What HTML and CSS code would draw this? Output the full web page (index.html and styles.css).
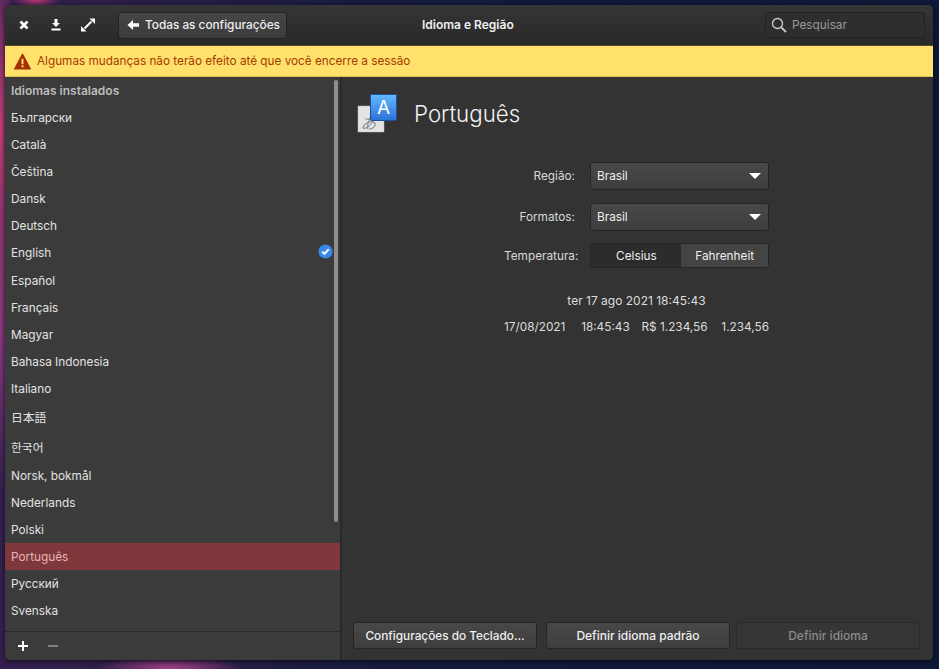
FILE: index.html
```html
<!DOCTYPE html>
<html lang="pt-BR">
<head>
  <meta charset="UTF-8">
  <title>Idioma e Região</title>
  <link rel="stylesheet" href="styles.css">
</head>
<body>
  <div class="window">
    <header class="titlebar">
      <div class="window-controls">
        <svg class="control" viewBox="0 0 16 16"><path d="M4.500 4.500l7 7M11.500 4.500l-7 7" stroke="#fff" stroke-width="2.600"/></svg>
        <svg class="control" viewBox="0 0 16 16"><path d="M6.500 2h3v4H12L8 10 4 6h2.500z" fill="#fff"/><path d="M3.500 12.500h9" stroke="#fff" stroke-width="2"/></svg>
        <svg class="control" viewBox="0 0 16 16"><path d="M9.500 1.500h5.500V7zM6.500 14.500H1V9z" fill="#fff"/><path d="M11.500 4.500l-7 7" stroke="#fff" stroke-width="2"/></svg>
      </div>
      <button class="back-button">
        <svg class="back-arrow" viewBox="0 0 14 12"><path d="M6.500 0.500v3.500H13v4H6.500v3.500L0.500 6z" fill="#fff"/></svg>
        Todas as configurações
      </button>
      <div class="title">Idioma e Região</div>
      <div class="search">
        <svg class="search-icon" viewBox="0 0 16 16"><circle cx="6.500" cy="6.500" r="5" fill="none" stroke="#ccc" stroke-width="1.300"/><path d="M10.300 10.300L15 15" stroke="#ccc" stroke-width="1.800"/></svg>
        Pesquisar
      </div>
    </header>

    <div class="infobar">
      <svg class="warn-icon" viewBox="0 0 16 16"><path d="M8 1L15.500 15H.5z" fill="#a33000" stroke="#a33000" stroke-linejoin="round"/><path d="M8 5.500v5M8 11.500v2" stroke="#ffe16b" stroke-width="1.800"/></svg>
      Algumas mudanças não terão efeito até que você encerre a sessão
    </div>

    <div class="content">
      <aside class="sidebar">
        <div class="list">
          <div class="list-header">Idiomas instalados</div>
          <div class="row">Български</div>
          <div class="row">Català</div>
          <div class="row">Čeština</div>
          <div class="row">Dansk</div>
          <div class="row">Deutsch</div>
          <div class="row row-english">English
            <svg class="check" viewBox="0 0 16 16"><circle cx="8" cy="8" r="7.500" fill="#3689e6"/><path d="M4.500 8.300l2.400 2.300 4.500-5" stroke="#fff" stroke-width="2" fill="none"/></svg>
          </div>
          <div class="row">Español</div>
          <div class="row">Français</div>
          <div class="row">Magyar</div>
          <div class="row">Bahasa Indonesia</div>
          <div class="row">Italiano</div>
          <div class="row row-cjk">日本語</div>
          <div class="row row-cjk">한국어</div>
          <div class="row">Norsk, bokmål</div>
          <div class="row">Nederlands</div>
          <div class="row">Polski</div>
          <div class="row selected">Português</div>
          <div class="row">Русский</div>
          <div class="row">Svenska</div>
          <div class="scrollbar"></div>
        </div>
        <div class="actionbar">
          <svg class="action" viewBox="0 0 12 12"><path d="M6 1v10M1 6h10" stroke="#fff" stroke-width="2"/></svg>
          <svg class="action" viewBox="0 0 12 12"><path d="M1 6h10" stroke="#7f7f7f" stroke-width="2"/></svg>
        </div>
      </aside>

      <main class="main">
        <div class="lang-header">
          <svg class="lang-icon" viewBox="0 0 42 42">
            <defs>
              <linearGradient id="blue" x1="0" y1="0" x2="0" y2="1">
                <stop offset="0" stop-color="#64baff"/>
                <stop offset="1" stop-color="#2a72d8"/>
              </linearGradient>
            </defs>
            <rect x="1" y="13" width="26" height="26" fill="#e4e4e4" stroke="#bdbdbd" stroke-width=".5"/>
            <text x="3.500" y="36" class="icon-kana">あ</text>
            <rect x="13.500" y="1.500" width="26" height="26" rx="1" fill="url(#blue)" stroke="#1c4f9c"/>
            <text x="26.500" y="21" class="icon-letter">A</text>
          </svg>
          <h1>Português</h1>
        </div>

        <div class="settings">
          <div class="setting">
            <label>Região:</label>
            <div class="combo">Brasil<span class="caret"></span></div>
          </div>
          <div class="setting">
            <label>Formatos:</label>
            <div class="combo">Brasil<span class="caret"></span></div>
          </div>
          <div class="setting setting-temp">
            <label>Temperatura:</label>
            <div class="segmented">
              <div class="segment active">Celsius</div>
              <div class="segment">Fahrenheit</div>
            </div>
          </div>
          <div class="preview">
            <div class="preview-date">ter 17 ago 2021 18:45:43</div>
            <div class="preview-formats">
              <span>17/08/2021</span>
              <span class="preview-time">18:45:43</span>
              <span>R$ 1.234,56</span>
              <span>1.234,56</span>
            </div>
          </div>
        </div>

        <div class="buttons">
          <button class="button">Configurações do Teclado...</button>
          <button class="button button-default">Definir idioma padrão</button>
          <button class="button disabled">Definir idioma</button>
        </div>
      </main>
    </div>
  </div>
</body>
</html>
```

FILE: styles.css
```css
html, body {
  height: 100%;
}
body {
  margin: 0;
  overflow: hidden;
  font-family: Inter, "Noto Sans CJK JP", "Noto Sans CJK KR", sans-serif;
  font-size: 11.800px;
  color: #e6e6e6;
  background:
    radial-gradient(ellipse 24px 8px at 36px 0, #b5356f, transparent),
    radial-gradient(ellipse 18px 190px at 0 130px, #c43f78, transparent),
    radial-gradient(ellipse 20px 170px at 0 320px, #8f3a80, transparent),
    radial-gradient(ellipse 75px 14px at 170px 669px, #a83f85, transparent),
    linear-gradient(90deg, #34204f, #141a3c 45%, #0c1836);
}
.window {
  box-sizing: border-box;
  width: 928px;
  height: 655px;
  margin: 5px 0 0 5px;
  display: flex;
  flex-direction: column;
  border-radius: 5px;
  overflow: hidden;
  background: #333;
  box-shadow: 0 1px 4px rgba(0, 0, 0, 0.7);
}
.titlebar {
  height: 40px;
  flex: none;
  display: flex;
  align-items: center;
  position: relative;
  background: linear-gradient(#353535, #292929);
  border-bottom: 1px solid #4f4a35;
}
.window-controls {
  display: flex;
  gap: 16px;
  margin-left: 11px;
}
.control {
  width: 16px;
  height: 16px;
}
.back-button {
  display: flex;
  align-items: center;
  gap: 5px;
  height: 27px;
  width: 169px;
  margin-left: 22px;
  padding: 0 0 0 8px;
  white-space: nowrap;
  font: 500 11.800px Inter, sans-serif;
  color: #eee;
  background: linear-gradient(#464646, #3b3b3b);
  border: 1px solid #222;
  border-radius: 3px;
}
.back-arrow {
  width: 13px;
  height: 12px;
}
.title {
  position: absolute;
  left: 417px;
  top: 12px;
  font-weight: 600;
  font-size: 12px;
  color: #f0f0f0;
}
.search {
  display: flex;
  align-items: center;
  gap: 5px;
  box-sizing: border-box;
  width: 160px;
  height: 26px;
  margin-left: auto;
  margin-right: 8px;
  padding-left: 5px;
  color: #999;
  background: #2e2e2e;
  border: 1px solid #222;
  border-radius: 3px;
}
.search-icon {
  width: 16px;
  height: 16px;
}
.infobar {
  height: 31px;
  flex: none;
  display: flex;
  align-items: center;
  gap: 6px;
  padding-left: 9px;
  font-size: 11.750px;
  color: #a63a00;
  background: #ffe16b;
  border-bottom: 1px solid #e0c050;
  box-sizing: border-box;
}
.warn-icon {
  width: 17px;
  height: 17px;
}
.content {
  flex: 1;
  display: flex;
  min-height: 0;
}
.sidebar {
  width: 335px;
  flex: none;
  display: flex;
  flex-direction: column;
  background: #3b3b3b;
  border-right: 2px solid #2a2a2a;
}
.list {
  flex: 1;
  position: relative;
}
.list-header {
  height: 27px;
  line-height: 28px;
  padding-left: 6px;
  font-weight: 600;
  font-size: 12px;
  color: #bdbdbd;
}
.row {
  height: 27px;
  line-height: 29px;
  padding-left: 6px;
  position: relative;
  color: #e2e2e2;
}
.row-english {
  height: 28px;
}
.row-cjk {
  height: 30px;
  line-height: 33px;
}
.selected {
  background: #7e383b;
  color: #e6b5b8;
}
.check {
  position: absolute;
  left: 313px;
  top: 5px;
  width: 15px;
  height: 15px;
}
.scrollbar {
  position: absolute;
  right: 2px;
  top: 3px;
  width: 4px;
  height: 442px;
  border-radius: 2px;
  background: #8f8f8f;
}
.actionbar {
  height: 28px;
  flex: none;
  display: flex;
  align-items: center;
  gap: 18px;
  padding-left: 12px;
  border-top: 1px solid #2a2a2a;
}
.action {
  width: 12px;
  height: 12px;
}
.main {
  flex: 1;
  display: flex;
  flex-direction: column;
  background: #333;
}
.lang-header {
  display: flex;
  align-items: center;
  gap: 15px;
  padding: 16px 0 0 15px;
}
.lang-icon {
  width: 42px;
  height: 42px;
}
.icon-kana {
  font: italic 15.500px "Noto Sans CJK JP", sans-serif;
  fill: #8a8a8a;
}
.icon-letter {
  font: 19px Inter, sans-serif;
  fill: #fff;
  text-anchor: middle;
}
h1 {
  margin: 0 0 2px;
  font-weight: 300;
  font-size: 22.300px;
  color: #f2f2f2;
}
.settings {
  margin-top: 26px;
  margin-left: 162px;
  width: 265px;
  display: flex;
  flex-direction: column;
}
.setting {
  display: flex;
  align-items: center;
  justify-content: flex-end;
  height: 29px;
  margin-bottom: 12px;
}
.setting label {
  margin-right: 15px;
  color: #d8d8d8;
}
.setting-temp {
  height: 25px;
  margin-bottom: 0;
}
.setting-temp label {
  margin-right: 12px;
}
.combo {
  box-sizing: border-box;
  width: 179px;
  height: 28px;
  display: flex;
  align-items: center;
  justify-content: space-between;
  padding: 0 7px 0 6px;
  background: linear-gradient(#484848, #3e3e3e);
  border: 1px solid #252525;
  border-radius: 3px;
  color: #eee;
}
.caret {
  width: 0;
  height: 0;
  border-left: 6px solid transparent;
  border-right: 6px solid transparent;
  border-top: 6px solid #fff;
}
.segmented {
  box-sizing: border-box;
  width: 179px;
  height: 25px;
  display: flex;
  border: 1px solid #252525;
  border-radius: 3px;
  overflow: hidden;
}
.segment {
  flex: 1;
  display: flex;
  align-items: center;
  justify-content: center;
  background: #444;
  color: #eee;
}
.segment.active {
  flex: none;
  width: 90px;
  background: #2c2c2c;
}
.preview {
  margin-top: 19px;
  color: #dcdcdc;
}
.preview-date {
  text-align: center;
  height: 27px;
  line-height: 27px;
  font-size: 12px;
}
.preview-formats {
  display: flex;
  justify-content: space-between;
  height: 27px;
  line-height: 27px;
}
.preview-time {
  margin: 0 -2px 0 2px;
}
.buttons {
  margin-top: auto;
  display: flex;
  padding: 0 13px 11px 11px;
}
.button {
  width: 184px;
  height: 27px;
  margin-right: 9px;
  padding: 0;
  font: 500 11.800px Inter, sans-serif;
  color: #eee;
  background: linear-gradient(#484848, #3e3e3e);
  border: 1px solid #252525;
  border-radius: 3px;
}
.button-default {
  margin-right: 6px;
  font-size: 12px;
}
.button.disabled {
  margin-right: 0;
  font-size: 12px;
  color: #8a8a8a;
  background: #363636;
  border-color: #2a2a2a;
}
```
